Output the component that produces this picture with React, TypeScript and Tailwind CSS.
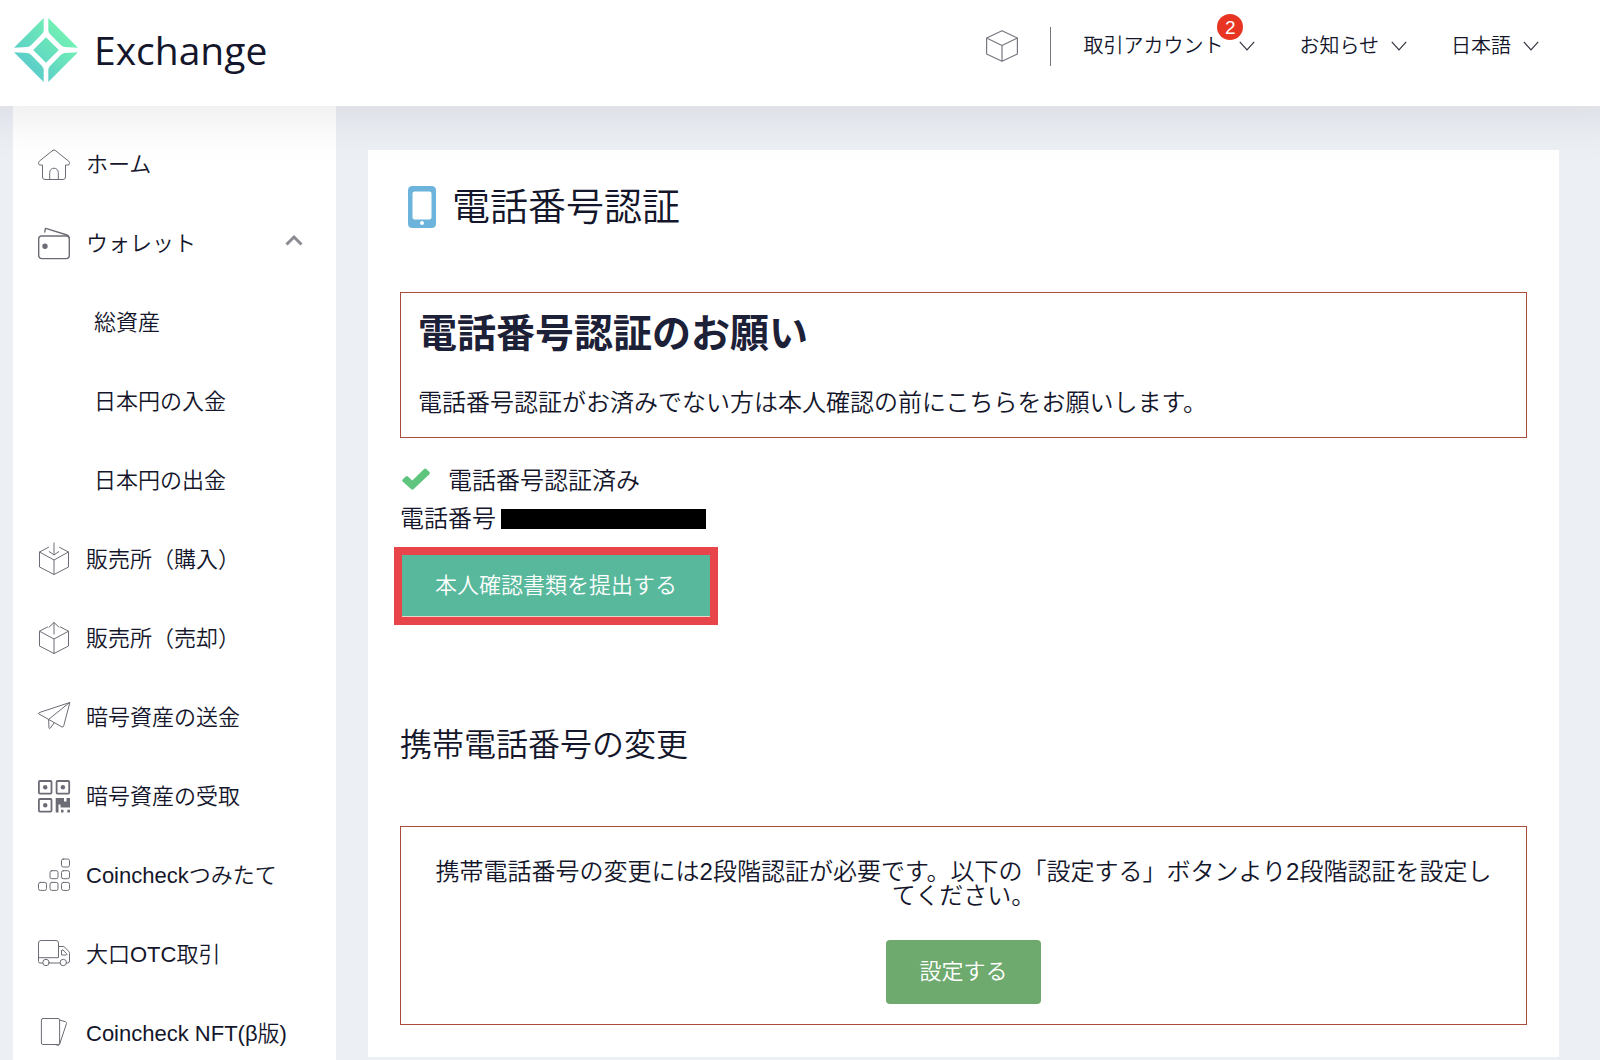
import type { ReactNode } from "react";

function Svg({ children, w = "1" }: { children: ReactNode; w?: string }) {
  return (
    <svg
      viewBox="0 0 32 32"
      className="h-8 w-8 shrink-0 overflow-visible"
      fill="none"
      stroke="#6c6c76"
      strokeWidth={w}
      strokeLinejoin="round"
      strokeLinecap="round"
      aria-hidden="true"
    >
      {children}
    </svg>
  );
}

const HomeIcon = () => (
  <Svg>
    <path d="M14.8 1.4 1.3 12.2Q.5 13 .5 14.3 .5 16 2 16H4.5V28Q4.5 30.5 7 30.5H25Q27.5 30.5 27.5 28V16H30Q31.5 16 31.5 14.3 31.5 13 30.7 12.2L17.2 1.4Q16 .5 14.8 1.4Z" />
    <path d="M11.7 30.5V23.5a4.3 4.3 0 0 1 8.6 0V30.5" />
  </Svg>
);
const WalletIcon = () => (
  <Svg w="1.4">
    <rect x=".7" y="8" width="30.6" height="22.6" rx="3" />
    <path d="M6.8 4 7.2 1.2Q7.5.3 8.6.6L29 7Q30.5 7.6 31 9.5" />
    <circle cx="7" cy="18.3" r="2" fill="#6c6c76" />
  </Svg>
);
const BuyIcon = () => (
  <Svg>
    <path d="M10.5 3.3 1.5 8V23L16 30.5 30.5 23V8L21.5 3.3M1.5 8 16 16 30.5 8M16 16V30.5M16-1V10.7M11.2 7.6 16 10.9 20.8 7.6" />
  </Svg>
);
const SellIcon = () => (
  <Svg>
    <path d="M9.5 4 1.5 8.2V23L16 30.5 30.5 23V8.2L22.5 4M1.5 8.2 16 16 30.5 8.2M16 16V30.5M16 11V-.5M11 4.2 16-.5 21 4.2" />
  </Svg>
);
const SendIcon = () => (
  <Svg>
    <path d="M31.5.6 1.2 10.6Q0 11.2 1 12L24 25Q25.2 25.4 25.6 24.2ZM31.5.6 10.6 17.4 11 26Q11.3 27.2 12.3 26.2L16.2 20.7" />
  </Svg>
);
const QrIcon = () => (
  <Svg w="1.8">
    <rect x=".9" y="0" width="12.6" height="12.6" rx="1" />
    <rect x="18.6" y="0" width="12.6" height="12.6" rx="1" />
    <rect x=".9" y="18" width="12.6" height="12.6" rx="1" />
    <g fill="#6c6c76" stroke="none">
      <circle cx="7.2" cy="6.3" r="2.2" />
      <circle cx="24.9" cy="6.3" r="2.2" />
      <circle cx="7.2" cy="24.3" r="2.2" />
      <path d="M17.7 17.1H26V20.5H28.5V17.1H32V26.5H22.5V23.5H20.5V31.5H17.7ZM23 28.7H25.5V31.5H23ZM29.3 28.7H32V31.5H29.3Z" />
    </g>
  </Svg>
);
const StepsIcon = () => (
  <Svg>
    <rect x="23.5" y="-1" width="8" height="8" rx="1.8" />
    <rect x="12" y="10.7" width="8" height="8" rx="1.8" />
    <rect x="23.5" y="10.7" width="8" height="8" rx="1.8" />
    <rect x=".5" y="22.4" width="8" height="8" rx="1.8" />
    <rect x="12" y="22.4" width="8" height="8" rx="1.8" />
    <rect x="23.5" y="22.4" width="8" height="8" rx="1.8" />
  </Svg>
);
const TruckIcon = () => (
  <Svg>
    <path d="M4.8 24H2Q.5 24 .5 22.5V4Q.5 1.5 3 1.5H18Q20.5 1.5 20.5 4V18.7H.5M11.2 24H22.1M20.5 7.5H25Q26 7.5 26.7 8.2L30.7 12.4Q31.5 13.2 31.5 14.3V22Q31.5 24 29.5 24H28.5M23.5 11.5V16H28.5Q29.2 15.5 28.6 14.8L25 11Q24 10.3 23.5 11.5Z" />
    <circle cx="8" cy="23.5" r="3.2" />
    <circle cx="25.3" cy="23.5" r="3.2" />
  </Svg>
);
const CardsIcon = () => (
  <Svg>
    <rect x="3.4" y=".5" width="18.2" height="26" rx="1.5" />
    <path d="M21.6 2 27.6 3.8Q28.8 4.3 28.5 5.5L21.6 26.3Q21 27.6 19.8 27.3L17 26.5" />
  </Svg>
);

function ChevronDown() {
  return (
    <svg viewBox="0 0 16 10" className="h-[10px] w-4" fill="none" stroke="#333340" strokeWidth="1.2" aria-hidden="true">
      <path d="M.8 .8 8 8.8 15.2 .8" />
    </svg>
  );
}

function Logo() {
  return (
    <svg viewBox="0 0 64 64" className="h-16 w-16" fill="url(#logo)" aria-hidden="true">
      <defs>
        <linearGradient id="logo" gradientUnits="userSpaceOnUse" x1="12" y1="52" x2="50" y2="14">
          <stop offset="0" stopColor="#5accca" />
          <stop offset="1" stopColor="#72f0b4" />
        </linearGradient>
      </defs>
      <path d="M29.7 0V12.5Q29.5 14.5 28 16L17.5 26.8Q15.8 28.6 13.5 29L0 29.7Z" />
      <path d="M34.3 0V12.5Q34.5 14.5 36 16L46.5 26.8Q48.2 28.6 50.5 29L64 29.7Z" />
      <path d="M29.7 64V51.5Q29.5 49.5 28 48L17.5 37.2Q15.8 35.4 13.5 35L0 34.3Z" />
      <path d="M34.3 64V51.5Q34.5 49.5 36 48L46.5 37.2Q48.2 35.4 50.5 35L64 34.3Z" />
      <path d="M32 19.2 44.8 32 32 44.8 19.2 32Z" />
    </svg>
  );
}

const items: { label: string; icon?: ReactNode; open?: boolean }[] = [
  { label: "ホーム", icon: <HomeIcon /> },
  { label: "ウォレット", icon: <WalletIcon />, open: true },
  { label: "総資産" },
  { label: "日本円の入金" },
  { label: "日本円の出金" },
  { label: "販売所（購入）", icon: <BuyIcon /> },
  { label: "販売所（売却）", icon: <SellIcon /> },
  { label: "暗号資産の送金", icon: <SendIcon /> },
  { label: "暗号資産の受取", icon: <QrIcon /> },
  { label: "Coincheckつみたて", icon: <StepsIcon /> },
  { label: "大口OTC取引", icon: <TruckIcon /> },
  { label: "Coincheck NFT(β版)", icon: <CardsIcon /> },
];

export default function App() {
  return (
    <div className="flex h-screen flex-col overflow-hidden bg-[#eceff4] font-['Liberation_Sans','Noto_Sans_CJK_JP',sans-serif] font-[350] text-[#14162b]">
      <header className="z-10 flex h-[106px] shrink-0 items-start justify-between bg-white pr-[61px] pl-[14px] shadow-[0_-24px_50px_30px_rgba(20,24,40,0.1)]">
        <a href="#" className="flex items-center gap-4 pt-[18px]">
          <Logo />
          <span className="font-['Open_Sans',sans-serif] text-[39px] leading-[62px] font-normal">Exchange</span>
        </a>
        <nav className="flex h-[92px] items-center text-[20px] leading-6">
          <a href="#" aria-label="ブロック">
            <svg viewBox="0 0 32 32" className="h-8 w-8" fill="none" stroke="#777780" strokeWidth="1.2" strokeLinejoin="round" aria-hidden="true">
              <path d="M16 .7 31.4 8V24L16 31.3.6 24V8ZM.6 8 16 15.5 31.4 8M16 15.5V31.3" />
            </svg>
          </a>
          <span className="mx-8 h-[39px] w-px bg-[#77777f]" />
          <div className="flex items-center gap-11">
            <button className="relative flex items-center gap-4">
              取引アカウント
              <ChevronDown />
              <span className="absolute -top-5 right-3 flex h-[26px] w-[26px] items-center justify-center rounded-full bg-[#e83422] text-[19px] leading-none text-white">
                2
              </span>
            </button>
            <button className="flex items-center gap-3">
              お知らせ
              <ChevronDown />
            </button>
            <button className="flex items-center gap-3">
              日本語
              <ChevronDown />
            </button>
          </div>
        </nav>
      </header>

      <div className="flex min-h-0 grow">
        <aside className="ml-[13px] w-[323px] shrink-0 bg-white pt-[19px]">
          <ul>
            {items.map((item) => (
              <li key={item.label}>
                <a href="#" className={item.icon ? "flex h-[79px] items-center gap-4 pr-[33px] pl-[25px] text-[22px]" : "flex h-[79px] items-center pl-[81px] text-[22px]"}>
                  {item.icon}
                  <span className="whitespace-nowrap">{item.label}</span>
                  {item.open && (
                    <svg viewBox="0 0 18 12" className="mb-2 ml-auto h-3 w-[18px]" fill="none" stroke="#8b8b93" strokeWidth="3" aria-hidden="true">
                      <path d="M1.5 10.5 9 3 16.5 10.5" />
                    </svg>
                  )}
                </a>
              </li>
            ))}
          </ul>
        </aside>

        <main className="mt-11 mr-[41px] mb-[3px] ml-8 flex grow flex-col items-start self-start bg-white px-8 pb-8">
          <h1 className="mt-8 flex items-center gap-4 pl-2 text-[38px] leading-[50px]">
            <svg viewBox="0 0 28 42" className="h-[42px] w-7" aria-hidden="true">
              <path
                fill="#6db4dc"
                fillRule="evenodd"
                d="M4.500 0H23.500Q28 0 28 4.500V37.500Q28 42 23.500 42H4.500Q0 42 0 37.500V4.500Q0 0 4.500 0ZM6.500 5.500Q4.500 5.500 4.500 7.500V31.500Q4.500 33.500 6.500 33.500H21.500Q23.500 33.500 23.500 31.500V7.500Q23.500 5.500 21.500 5.500ZM14 35A2 2 0 1 0 14 39A2 2 0 1 0 14 35Z"
              />
            </svg>
            電話番号認証
          </h1>

          <section className="mt-[60px] w-full border border-[#a84c3c] px-[17px] pt-4 pb-[18px]">
            <h2 className="text-[39px] leading-[50px] font-bold text-[#1d2138]">電話番号認証のお願い</h2>
            <p className="mt-7 text-[24px] leading-8">電話番号認証がお済みでない方は本人確認の前にこちらをお願いします。</p>
          </section>

          <p className="mt-6 flex items-center gap-[18px] pl-0.5 text-[24px] leading-[38px]">
            <svg viewBox="0 0 28 22" className="mb-1 h-[22px] w-7" aria-hidden="true">
              <path
                fill="#5fc57e"
                d="M.6 11.600 3.700 8.400Q4.800 7.500 5.900 8.400L10.300 12.600 22.100 1Q23.200 .1 24.300 1L27.400 4Q28.300 5.100 27.400 6.200L11.500 21.300Q10.400 22.200 9.300 21.300L.6 13.600Q-.2 12.600 .6 11.600Z"
              />
            </svg>
            電話番号認証済み
          </p>
          <p className="flex items-center gap-[5px] text-[24px] leading-[38px]">
            電話番号
            <span className="h-5 w-[205px] bg-black" />
          </p>
          <button className="mt-[9px] -ml-1.5 border-8 border-[#e8454b] bg-[#58b89c] text-[22px] leading-[61px] text-white">
            <span className="block border-b border-[#e9d5c5] px-[33px]">本人確認書類を提出する</span>
          </button>

          <h2 className="mt-[100px] text-[32px] leading-10">携帯電話番号の変更</h2>

          <section className="mt-[61px] flex w-full flex-col items-center border border-[#a84c3c] px-7 pt-[33px] pb-5">
            <p className="text-center text-[24px] leading-6">
              携帯電話番号の変更には2段階認証が必要です。以下の「設定する」ボタンより2段階認証を設定してください。
            </p>
            <button className="mt-8 rounded bg-[#6eaa6e] px-[33px] text-[22px] leading-[64px] text-white">設定する</button>
          </section>
        </main>
      </div>
    </div>
  );
}
